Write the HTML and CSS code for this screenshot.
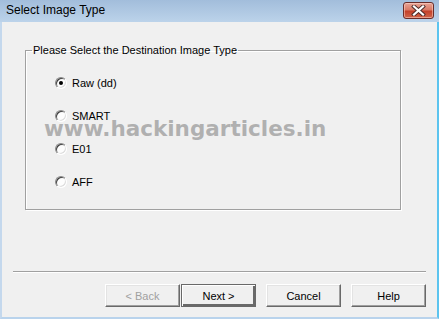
FILE: index.html
```html
<!DOCTYPE html>
<html lang="en">
<head>
    <meta charset="UTF-8">
    <title>Select Image Type</title>
    <link rel="stylesheet" href="styles.css">
</head>
<body>
    <div class="window">
        <div class="titlebar">
            <span class="title">Select Image Type</span>
            <span class="close-btn">
                <svg width="17" height="11" viewBox="0 0 17 11">
                    <path d="M4 1.5l9 8M13 1.5l-9 8" stroke="#4a2a28" stroke-width="4" stroke-linecap="square"/>
                    <path d="M4 1.5l9 8M13 1.5l-9 8" stroke="#ffffff" stroke-width="2.2" stroke-linecap="square"/>
                </svg>
            </span>
        </div>
        <div class="client">
            <fieldset class="group">
                <legend>Please Select the Destination Image Type</legend>
                <div class="options">
                    <label class="option"><span class="radio checked"></span>Raw (dd)</label>
                    <label class="option"><span class="radio"></span>SMART</label>
                    <label class="option"><span class="radio"></span>E01</label>
                    <label class="option"><span class="radio"></span>AFF</label>
                </div>
            </fieldset>
            <div class="separator"></div>
            <div class="buttons">
                <button class="btn back" disabled>&lt; Back</button>
                <button class="btn default">Next &gt;</button>
                <button class="btn">Cancel</button>
                <button class="btn">Help</button>
            </div>
        </div>
        <div class="watermark">www.hackingarticles.in</div>
    </div>
</body>
</html>
```

FILE: styles.css
```css
body {
    margin: 0;
    padding: 0;
    font-family: "Liberation Sans", Arial, sans-serif;
    font-size: 11px;
    color: #000;
    background: #f0f0f0;
}
.window {
    position: relative;
    width: 439px;
    height: 319px;
    box-sizing: border-box;
    display: flex;
    flex-direction: column;
    border-left: 2px solid #c4d8ed;
    border-right: 2px solid #5cc4ef;
    border-bottom: 2px solid #b9d3ec;
    background: #f0f0f0;
}
.titlebar {
    height: 22px;
    margin: 0 -2px;
    padding: 2px 5px 0 6px;
    box-sizing: border-box;
    display: flex;
    justify-content: space-between;
    align-items: flex-start;
    background: linear-gradient(#a2bddb, #bcd3ea);
}
.title {
    font-size: 12px;
    line-height: 17px;
    color: #000;
}
.close-btn {
    width: 31px;
    height: 17px;
    box-sizing: border-box;
    border: 1px solid #6a2d2a;
    border-radius: 3px;
    background: linear-gradient(#e8a496 0%, #d97a66 45%, #c4412a 55%, #d0654b 100%);
    box-shadow: inset 0 0 0 1px rgba(255, 220, 210, 0.5);
    display: flex;
    align-items: center;
    justify-content: center;
}
.client {
    flex: 1;
    display: flex;
    flex-direction: column;
}
.group {
    margin: 22px 36px 0 23px;
    padding: 0 6px 19px 6px;
    border: 1px solid #a0a0a0;
    box-shadow: 1px 1px 0 #fff, inset 1px 1px 0 #fff;
    min-width: 0;
}
.group legend {
    padding: 0 1px;
    line-height: 13px;
}
.options {
    padding: 18px 0 0 23px;
    display: flex;
    flex-direction: column;
    gap: 17px;
}
.option {
    height: 16px;
    display: flex;
    align-items: center;
}
.radio {
    position: relative;
    width: 12px;
    height: 12px;
    box-sizing: border-box;
    margin-right: 5px;
    border-radius: 50%;
    border: 1px solid;
    border-color: #8a8a8a #ffffff #ffffff #8a8a8a;
    background: #fdfdfd;
    box-shadow: inset 1px 1px 0 #404040, inset -1px -1px 0 #dcdcdc;
}
.radio.checked::after {
    content: "";
    position: absolute;
    left: 3px;
    top: 3px;
    width: 4px;
    height: 4px;
    border-radius: 50%;
    background: #000;
}
.separator {
    margin: auto 11px 0 11px;
    height: 1px;
    background: #a0a0a0;
    border-bottom: 1px solid #fff;
}
.buttons {
    display: flex;
    justify-content: flex-end;
    gap: 10px;
    margin: 11px 11px 10px 0;
}
.btn {
    width: 75px;
    height: 23px;
    box-sizing: border-box;
    padding: 0;
    font-family: "Liberation Sans", Arial, sans-serif;
    font-size: 11px;
    color: #000;
    background: #f0f0f0;
    border: 1px solid;
    border-color: #ffffff #696969 #696969 #ffffff;
    box-shadow: inset -1px -1px 0 #a0a0a0, inset 1px 1px 0 #e3e3e3;
}
.btn.back {
    color: #a0a0a0;
    margin-right: -9px;
}
.btn.default {
    border: 1px solid #696969;
    box-shadow: inset 1px 1px 0 #ffffff, inset -2px -2px 0 #696969;
}
.watermark {
    position: absolute;
    left: 42px;
    top: 118px;
    font-family: "DejaVu Sans", Verdana, sans-serif;
    font-weight: bold;
    font-size: 21.5px;
    line-height: 1;
    color: rgba(165, 165, 165, 0.85);
    pointer-events: none;
}
```
